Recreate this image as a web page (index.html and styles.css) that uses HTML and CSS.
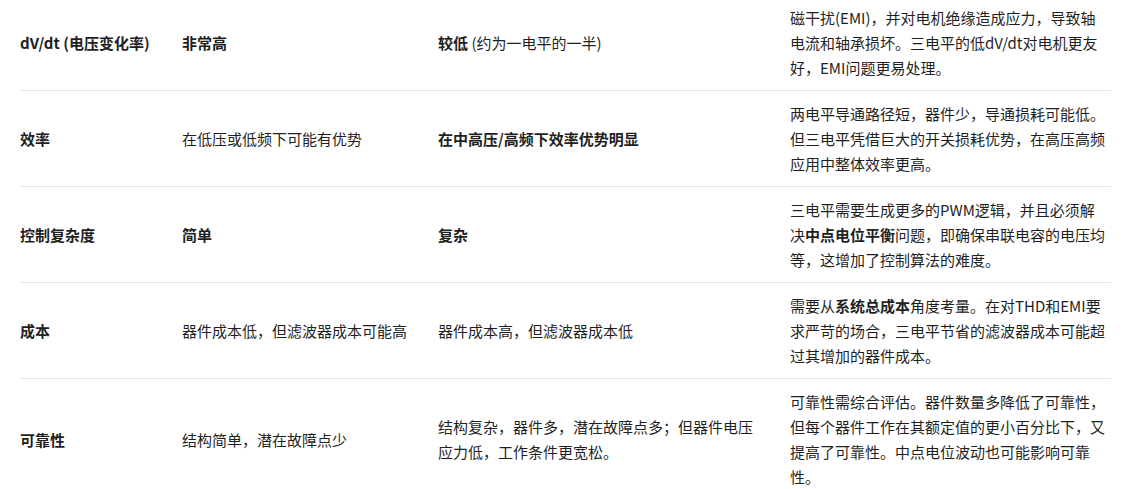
FILE: index.html
```html
<!DOCTYPE html>
<html lang="zh-CN">
<head>
<meta charset="utf-8">
<title>两电平与三电平对比</title>
<link rel="stylesheet" href="styles.css">
</head>
<body>
<div class="wrap">
<table class="cmp">
  <colgroup>
    <col class="c1"><col class="c2"><col class="c3"><col class="c4">
  </colgroup>
  <tbody>
    <tr>
      <td class="key">dV/dt (电压变化率)</td>
      <td><b>非常高</b></td>
      <td><b>较低</b> (约为一电平的一半)</td>
      <td>磁干扰(EMI)，并对电机绝缘造成应力，导致轴电流和轴承损坏。三电平的低dV/dt对电机更友好，EMI问题更易处理。</td>
    </tr>
    <tr>
      <td class="key">效率</td>
      <td>在低压或低频下可能有优势</td>
      <td><b>在中高压/高频下效率优势明显</b></td>
      <td>两电平导通路径短，器件少，导通损耗可能低。但三电平凭借巨大的开关损耗优势，在高压高频应用中整体效率更高。</td>
    </tr>
    <tr>
      <td class="key">控制复杂度</td>
      <td><b>简单</b></td>
      <td><b>复杂</b></td>
      <td>三电平需要生成更多的PWM逻辑，并且必须解决<b>中点电位平衡</b>问题，即确保串联电容的电压均等，这增加了控制算法的难度。</td>
    </tr>
    <tr>
      <td class="key">成本</td>
      <td>器件成本低，但滤波器成本可能高</td>
      <td>器件成本高，但滤波器成本低</td>
      <td>需要从<b>系统总成本</b>角度考量。在对THD和EMI要求严苛的场合，三电平节省的滤波器成本可能超过其增加的器件成本。</td>
    </tr>
    <tr>
      <td class="key">可靠性</td>
      <td>结构简单，潜在故障点少</td>
      <td>结构复杂，器件多，潜在故障点多；但器件电压应力低，工作条件更宽松。</td>
      <td>可靠性需综合评估。器件数量多降低了可靠性，但每个器件工作在其额定值的更小百分比下，又提高了可靠性。中点电位波动也可能影响可靠性。</td>
    </tr>
  </tbody>
</table>
</div>
</body>
</html>
```

FILE: styles.css
```css
html, body {
  margin: 0;
  padding: 0;
  background: #ffffff;
}

body {
  font-family: "Noto Sans CJK SC", "Noto Sans", sans-serif;
  font-size: 15px;
  line-height: 25px;
  color: #1f1f1f;
  overflow: hidden;
}

.wrap {
  padding: 0 27px 0 20px;
  margin-top: -5px;
}

.cmp {
  width: 1091px;
  border-collapse: collapse;
  table-layout: fixed;
}

.c1 { width: 150px; }
.c2 { width: 256px; }
.c3 { width: 352px; }
.c4 { width: 333px; }

.cmp td {
  padding: 10px 12px;
  vertical-align: middle;
  border-bottom: 1px solid #e6e6e6;
  word-break: break-all;
}

.cmp td:first-child {
  padding-left: 0;
}

.cmp td:last-child {
  padding-right: 2px;
}

.cmp b,
.cmp .key {
  font-weight: 700;
}
```
